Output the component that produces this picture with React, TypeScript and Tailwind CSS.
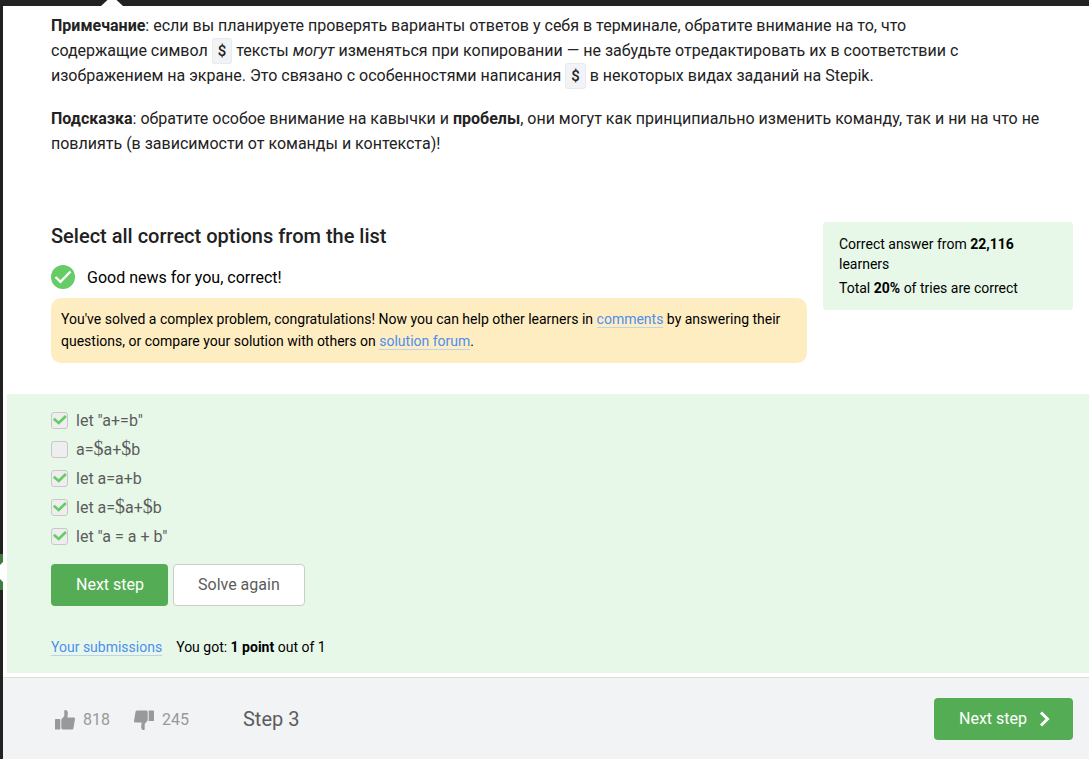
import type { ReactNode } from "react";

function Code({ children }: { children: ReactNode }) {
  return (
    <code className="rounded-[3px] border border-[#e9eaee] bg-[#f2f3f6] px-[5px] py-[3px] font-[Roboto,sans-serif] text-[15px] leading-none font-medium">
      {children}
    </code>
  );
}

function TextLink({ children }: { children: ReactNode }) {
  return (
    <a href="#" className="border-b border-[#bcd3ea] text-[#4d8ef0]">
      {children}
    </a>
  );
}

function Dollar() {
  return <span className="font-['Liberation_Serif',serif] text-[20px] leading-none">$</span>;
}

const options: { id: string; checked: boolean; label: ReactNode }[] = [
  { id: "opt-1", checked: true, label: 'let "a+=b"' },
  { id: "opt-2", checked: false, label: <>a=<Dollar />a+<Dollar />b</> },
  { id: "opt-3", checked: true, label: "let a=a+b" },
  { id: "opt-4", checked: true, label: <>let a=<Dollar />a+<Dollar />b</> },
  { id: "opt-5", checked: true, label: 'let "a = a + b"' },
];

function Option({ id, checked, label }: { id: string; checked: boolean; label: ReactNode }) {
  return (
    <li className="flex h-[29px] items-center">
      <span className="grid size-[17px] shrink-0">
        <input
          id={id}
          type="checkbox"
          defaultChecked={checked}
          className="peer col-start-1 row-start-1 size-[17px] appearance-none rounded-[3px] border border-[#c8c8c8] bg-[#eeeeee]"
        />
        <svg
          viewBox="0 0 17 17"
          className="pointer-events-none invisible col-start-1 row-start-1 size-[17px] peer-checked:visible"
        >
          <path d="M2.800 6.800l4.900 4.200 7.200-7" fill="none" stroke="#66cc66" strokeWidth="2.600" />
        </svg>
      </span>
      <label htmlFor={id} className="pl-2 text-[16px] leading-[28px] whitespace-nowrap text-[#5c5c5c]">
        {label}
      </label>
    </li>
  );
}

function Thumb({ down = false }: { down?: boolean }) {
  return (
    <svg viewBox="0 0 20 20" className={down ? "size-5 rotate-180" : "size-5"} fill="#999999">
      <path d="M0.6 9h4.1c.4 0 .6.2.6.6v9.3c0 .4-.2.6-.6.6H.6c-.4 0-.6-.2-.6-.6V9.600c0-.4.2-.6.6-.6z" />
      <path d="M6.300 9.500L9.300 6V1c0-.8.600-1.200 1.400-1 1.700.4 2.300 1.900 2.100 3.800l-.4 3.700h6.400c.9 0 1.400.6 1.200 1.500l-1.500 9c-.2 1-.8 1.500-1.700 1.500H8c-1 0-1.700-.5-1.700-1.400z" />
    </svg>
  );
}

export default function App() {
  return (
    <div className="flex min-h-screen flex-col bg-white font-[Roboto,sans-serif] text-[#222222]">
      <header className="h-[6px] bg-[#222222] pl-[101px]">
        <svg viewBox="0 0 22 6" className="h-[6px] w-[22px]">
          <path d="M0 6L6.500 0h9L22 6z" fill="#ffffff" />
        </svg>
      </header>
      <div className="flex grow">
        <aside className="flex w-[3px] shrink-0 flex-col bg-[#222222] pt-[548px]">
          <svg viewBox="0 0 3 36" className="h-9 w-[3px]">
            <path d="M0 0h3v36H0z" fill="#3f7c42" />
            <path d="M0 11l3-3v20l-3-3z" fill="#ffffff" />
          </svg>
        </aside>
        <main className="flex min-w-0 grow flex-col">
          <div className="pt-[7px] pr-12 pl-12 text-[16px] leading-[25px]">
            <p>
              <strong>Примечание</strong>: если вы планируете проверять варианты ответов у себя в
              терминале, обратите внимание на то, что содержащие&nbsp;символ{" "}
              <Code>$</Code> тексты <em>могут</em> изменяться при копировании — не забудьте
              отредактировать их в соответствии с изображением на экране. Это связано с
              особенностями написания <Code>$</Code> в некоторых видах заданий на Stepik.
            </p>
            <p className="mt-[18px]">
              <strong>Подсказка</strong>: обратите особое внимание на кавычки и{" "}
              <strong>пробелы</strong>, они могут как принципиально изменить команду, так и ни на
              что не повлиять (в зависимости от команды и контекста)!
            </p>
          </div>

          <div className="mt-[66px] flex items-start gap-4 pr-4 pl-12">
            <section className="min-w-0 grow text-black">
              <h2 className="text-[20px] leading-7 font-medium text-[#222222]">
                Select all correct options from the list
              </h2>
              <div className="mt-[15px] flex h-6 items-center gap-3">
                <svg viewBox="0 0 24 24" className="size-6">
                  <circle cx="12" cy="12" r="12" fill="#66cc66" />
                  <path d="M4.500 12l5 4.900L19.500 6.500" fill="none" stroke="#ffffff" strokeWidth="2.400" />
                </svg>
                <span className="pt-[2px] text-[16px] leading-6">Good news for you, correct!</span>
              </div>
              <p className="mt-[9px] rounded-[10px] bg-[#ffedc2] px-[10px] pt-[10px] pb-[11px] text-[14px] leading-[22px]">
                You've solved a complex problem, congratulations! Now you can help other learners in{" "}
                <TextLink>comments</TextLink> by answering their questions, or compare your solution
                with others on <TextLink>solution forum</TextLink>.
              </p>
            </section>
            <aside className="flex w-[250px] shrink-0 flex-col gap-1 rounded-[4px] bg-[#e7f8e9] px-4 py-3 text-[14px] leading-5 text-black">
              <p>
                Correct answer from <strong>22,116</strong> learners
              </p>
              <p>
                Total <strong>20%</strong> of tries are correct
              </p>
            </aside>
          </div>

          <section className="mt-[31px] mb-1 ml-1 bg-[#e7f8e9] px-11 pt-3 pb-4">
            <ul>
              {options.map((o) => (
                <Option key={o.id} {...o} />
              ))}
            </ul>
            <div className="mt-[13px] flex gap-[5px] text-[16px]">
              <button className="h-[42px] rounded-[4px] bg-[#54ad54] pr-6 pl-[25px] text-white">
                Next step
              </button>
              <button className="h-[42px] rounded-[4px] border border-[#cccccc] bg-white px-6 text-[#5c5c5c]">
                Solve again
              </button>
            </div>
            <div className="mt-[31px] flex gap-[14px] text-[14px] leading-5 text-black">
              <span>
                <TextLink>Your submissions</TextLink>
              </span>
              <span>
                You got: <strong>1 point</strong> out of 1
              </span>
            </div>
          </section>

          <footer className="flex grow items-center border-t border-[#dcdde0] bg-[#f2f3f5] pr-4 pl-[52px]">
            <button aria-label="Like" className="flex items-center gap-2 pt-[2px] text-[16px] text-[#999999]">
              <Thumb />
              818
            </button>
            <button aria-label="Dislike" className="ml-6 flex items-center gap-2 pt-[2px] text-[16px] text-[#999999]">
              <Thumb down />
              245
            </button>
            <span className="ml-[54px] text-[20px] leading-7 text-[#5c5c5c]">Step 3</span>
            <button className="ml-auto flex h-[42px] items-center gap-3 rounded-[4px] bg-[#54ad54] pr-[23px] pl-[25px] text-[16px] text-white">
              Next step
              <svg viewBox="0 0 11 16" className="h-4 w-[11px]">
                <path d="M2 1.500l6.500 6.500L2 14.500" fill="none" stroke="#ffffff" strokeWidth="3" />
              </svg>
            </button>
          </footer>
        </main>
      </div>
    </div>
  );
}
